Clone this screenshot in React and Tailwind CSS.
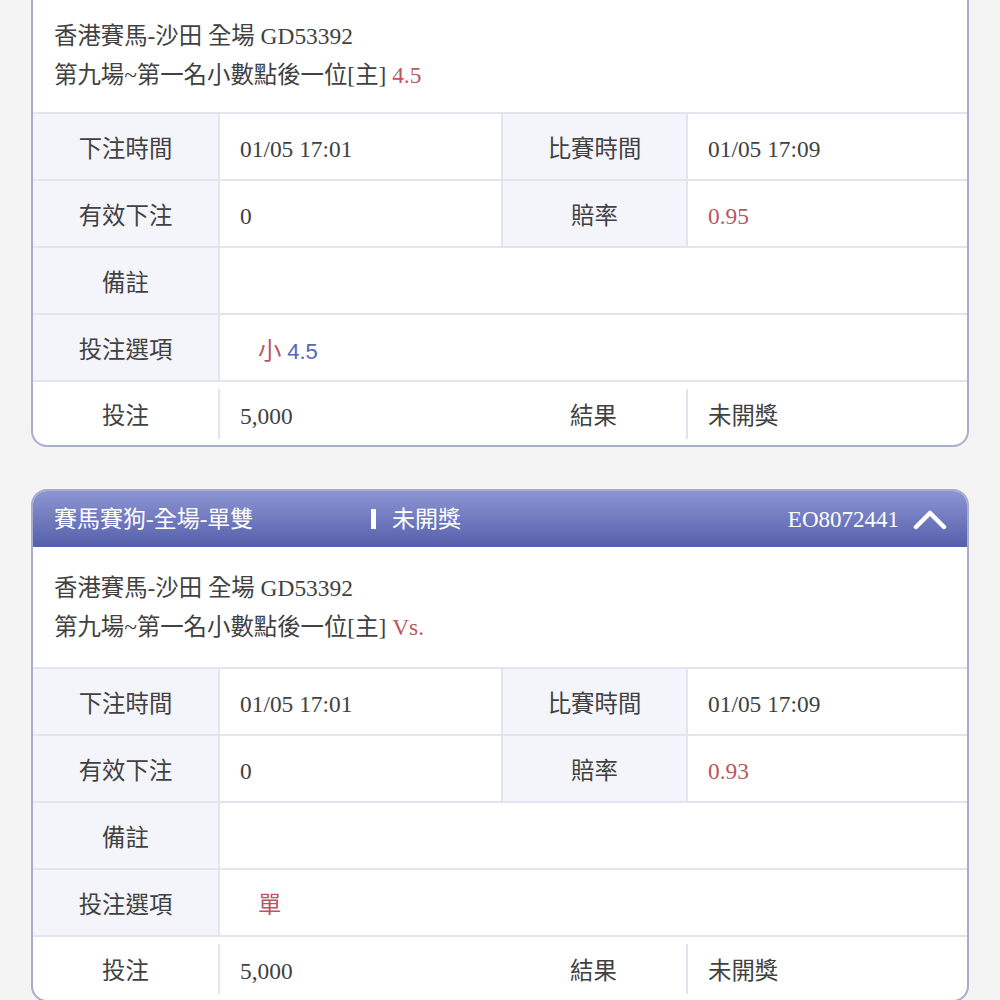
import React from "react";

const RED = "text-[#b9565f]";

function Header({ title, id }) {
  return (
    <div className="h-[56px] flex items-center bg-gradient-to-b from-[#8d95d2] to-[#5660ab] text-white pl-[21px] pr-[20px]">
      <div className="w-[317px] text-[23px] leading-none">{title}</div>
      <span className="w-[5px] h-[20px] bg-white mr-[16px]" />
      <div className="text-[23px] leading-none">未開獎</div>
      <div className="ml-auto text-[23px] leading-none">{id}</div>
      <svg width="34" height="22" viewBox="0 0 34 22" className="ml-[14px]">
        <polyline points="3,19 17,5 31,19" fill="none" stroke="white" strokeWidth="4.5" strokeLinecap="round" strokeLinejoin="round" />
      </svg>
    </div>
  );
}

function Row4({ l1, v1, l2, v2, v2red }) {
  return (
    <div className="grid grid-cols-[185px_283px_185px_1fr] h-[67px] border-t-2 border-[#e2e4f0]">
      <div className="bg-[#f4f5fa] flex items-center justify-center pt-[7px]">{l1}</div>
      <div className="border-l-2 border-[#e2e4f0] flex items-center pl-[20px] pt-[7px]">{v1}</div>
      <div className="border-l-2 border-[#e2e4f0] bg-[#f4f5fa] flex items-center justify-center pt-[7px]">{l2}</div>
      <div className={"border-l-2 border-[#e2e4f0] flex items-center pl-[20px] pt-[7px] " + (v2red ? RED : "")}>{v2}</div>
    </div>
  );
}

function Row2({ l, children }) {
  return (
    <div className="grid grid-cols-[185px_1fr] h-[67px] border-t-2 border-[#e2e4f0]">
      <div className="bg-[#f4f5fa] flex items-center justify-center pt-[7px]">{l}</div>
      <div className="border-l-2 border-[#e2e4f0] flex items-center pl-[38px] pt-[7px]">{children}</div>
    </div>
  );
}

function LastRow() {
  return (
    <div className="grid grid-cols-[185px_283px_185px_1fr] h-[65px] border-t-2 border-[#e2e4f0]">
      <div className="flex items-center justify-center pt-[7px]">投注</div>
      <div className="flex items-center">
        <span className="w-[2px] h-[50px] bg-[#e2e4f0]" />
        <span className="pl-[20px] pt-[7px]">5,000</span>
      </div>
      <div className="flex items-center justify-center pt-[7px]">結果</div>
      <div className="flex items-center">
        <span className="w-[2px] h-[50px] bg-[#e2e4f0]" />
        <span className="pl-[20px] pt-[7px]">未開獎</span>
      </div>
    </div>
  );
}

function Body({ tail, odds, pick, top }) {
  return (
    <>
      <div className={"pl-[21px] leading-[39px] " + top}>
        <div>香港賽馬-沙田 全場 GD53392</div>
        <div>
          第九場~第一名小數點後一位[主] <span className={RED}>{tail}</span>
        </div>
      </div>
      <Row4 l1="下注時間" v1="01/05 17:01" l2="比賽時間" v2="01/05 17:09" />
      <Row4 l1="有效下注" v1="0" l2="賠率" v2={odds} v2red />
      <Row2 l="備註" />
      <Row2 l="投注選項">{pick}</Row2>
      <LastRow />
    </>
  );
}

export default function App() {
  return (
    <div className="w-[1000px] h-[1000px] overflow-hidden bg-[#f4f4f5] font-['Liberation_Serif','Noto_Sans_CJK_TC',serif] text-[23.4px] text-[#414141]">
      <div className="px-[31px] flex flex-col gap-[42px]">
        <div className="border-2 border-t-0 border-[#a8adcb] rounded-b-[16px] overflow-hidden bg-white">
          <Body
            top="pt-[17px] pb-[17px]"
            tail="4.5"
            odds="0.95"
            pick={
              <span>
                <span className={RED + " font-['Noto_Sans_CJK_TC',sans-serif]"}>小</span>{" "}
                <span className="text-[#5467b6] font-['Liberation_Sans',sans-serif] text-[22px]">4.5</span>
              </span>
            }
          />
        </div>
        <div className="border-2 border-[#a8adcb] rounded-[16px] overflow-hidden bg-white">
          <Header title="賽馬賽狗-全場-單雙" id="EO8072441" />
          <Body
            top="pt-[22px] pb-[20px]"
            tail="Vs."
            odds="0.93"
            pick={<span className={RED}>單</span>}
          />
        </div>
      </div>
    </div>
  );
}
